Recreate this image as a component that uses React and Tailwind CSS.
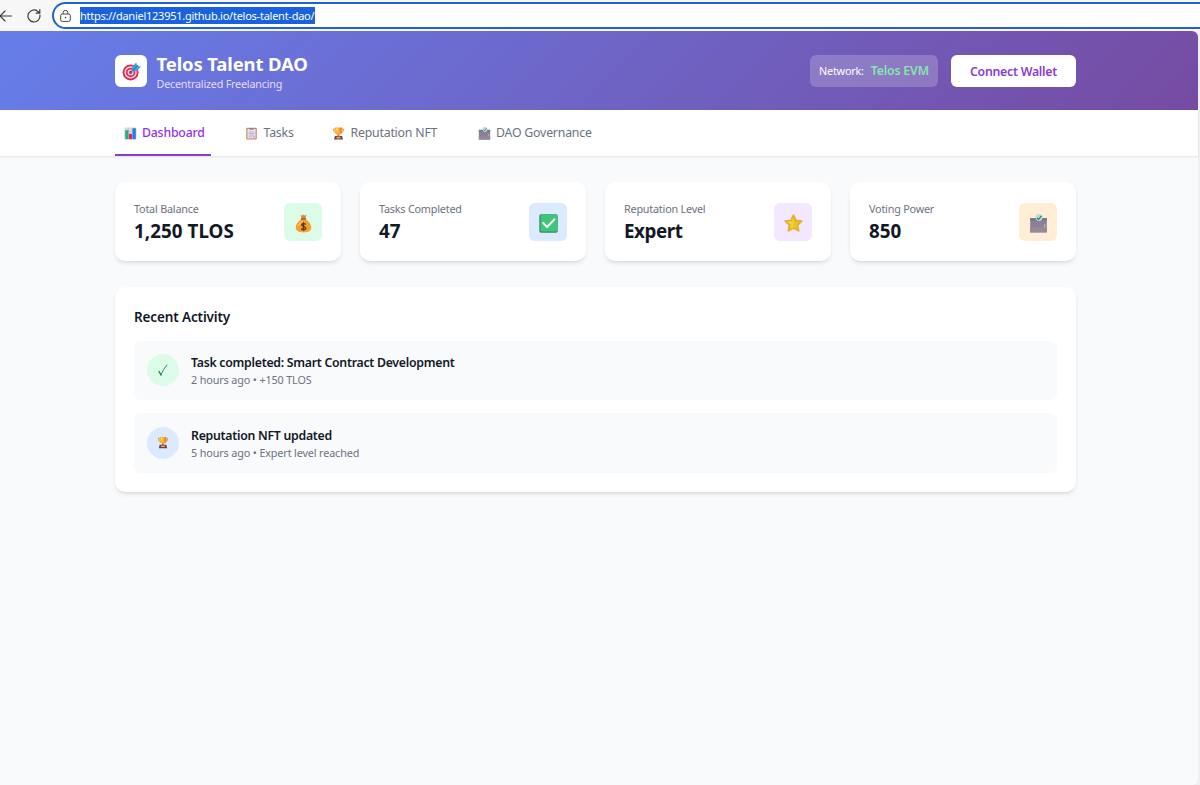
function Icon({ className, children }) {
  return (
    <svg viewBox="0 0 32 32" className={className} fill="none" aria-hidden="true">
      {children}
    </svg>
  );
}

function Target({ className }) {
  return (
    <Icon className={className}>
      <circle cx="14.5" cy="17.5" r="13.5" fill="#d92b54" />
      <circle cx="14.5" cy="17.5" r="10.4" fill="#f3d5e0" />
      <circle cx="14.5" cy="17.5" r="8" fill="#dc3159" />
      <circle cx="14.5" cy="17.5" r="5" fill="#f1d3de" />
      <circle cx="14.5" cy="17.5" r="2.6" fill="#d92b54" />
      <path d="M14.5 17.5 24 8" stroke="#30558a" strokeWidth="2" />
      <path d="M17 15V8l7-7 1.500 5.500L32 8l-7 7Z" fill="#3ba0df" />
      <path d="m18 14 9-9" stroke="#1e6bab" strokeWidth="1.500" />
    </Icon>
  );
}

function Chart({ className }) {
  return (
    <Icon className={className}>
      <rect x="1" y="1" width="30" height="30" rx="3" fill="#dcd6e2" />
      <path d="M1 11h30M1 21h30M11 1v30M21 1v30" stroke="#bdb3c8" />
      <rect x="3" y="8" width="8" height="22" fill="#22b07d" />
      <rect x="12" y="17" width="8" height="13" fill="#e0265f" />
      <rect x="21" y="3" width="8" height="27" fill="#1e82dc" />
    </Icon>
  );
}

function Clipboard({ className }) {
  return (
    <Icon className={className}>
      <rect x="3" y="2" width="26" height="29" rx="2.500" fill="#c98a6c" />
      <rect x="6" y="5" width="20" height="23" fill="#eee8f5" />
      <path d="M11 7V3h3a2.500 2.500 0 0 1 4 0h3v4Z" fill="#8d819c" />
      <path d="M9 12h14M9 16h14M9 20h14M9 24h9" stroke="#a394bd" strokeWidth="1.600" />
      <path d="M20 28v-5h6Z" fill="#b9a4cf" />
    </Icon>
  );
}

function Trophy({ className }) {
  return (
    <Icon className={className}>
      <path d="M9 5H4c0 7 2 9 7 10M23 5h5c0 7-2 9-7 10" stroke="#f08b2c" strokeWidth="2.400" />
      <path d="M7 1h18v8c0 6-3 10-9 10S7 15 7 9Z" fill="#fbb335" />
      <path d="M19 2h6v8c0 4-2 7-6 8Z" fill="#f28a2e" />
      <path d="M10 3h4v9c-3-2-4-5-4-9Z" fill="#ffdd73" />
      <path d="M14 18h4l1 5h-6Z" fill="#e8762d" />
      <path d="M7 22h18l2 9H5Z" fill="#74404f" />
      <rect x="11" y="24" width="10" height="4" rx="1" fill="#eba75b" />
    </Icon>
  );
}

function Ballot({ className }) {
  return (
    <Icon className={className}>
      <path d="M2 7h28v24H2Z" fill="#8b8095" />
      <path d="M2 7h28v4H2Z" fill="#797184" />
      <path d="M2 22h28v9H2Z" fill="#968799" />
      <path d="M11 6a6 6 0 1 1 12 0c0 4-3 6-6 6s-6-2-6-6Z" fill="#b6ded4" />
      <path d="m13.500 6.500 2.500 3L21 3" stroke="#337b70" strokeWidth="2" />
      <path d="M25 17h2.500v6H25Z" fill="#b4a8ba" />
    </Icon>
  );
}

function MoneyBag({ className }) {
  return (
    <Icon className={className}>
      <path d="m11 1 3 2 2-2 2 2 3-2-2 7h-6Z" fill="#d88b32" />
      <path d="M13 9h6c6 3 10 8 10 13.500 0 6-4 8.500-13 8.500S3 28.500 3 22.500C3 17 7 12 13 9Z" fill="#f4a229" />
      <path d="M12 12c-4 3-6 7-6 10 3-4 5-7 9-9Z" fill="#ffc552" />
      <path d="M11.500 8.500h9" stroke="#965229" strokeWidth="2.400" />
      <path d="M20 17.500c-2-2-7-2-7 1 0 3.500 7 2 7 5.500 0 3-5 3-8 1M16 14v14" stroke="#57352c" strokeWidth="2.200" />
    </Icon>
  );
}

function CheckBox({ className }) {
  return (
    <Icon className={className}>
      <rect x="0.500" y="0.500" width="31" height="31" rx="3" fill="#28935c" />
      <rect x="2.500" y="1" width="28.500" height="28.500" rx="2.500" fill="#41c57b" />
      <path d="m7 15 6.500 7L26 9" stroke="#fff" strokeWidth="3.400" strokeLinecap="round" strokeLinejoin="round" />
    </Icon>
  );
}

function Star({ className }) {
  return (
    <Icon className={className}>
      <path
        d="m16 2 4.200 8.700 9.600 1.300-7 6.700 1.800 9.600L16 23.700l-8.600 4.600 1.800-9.600-7-6.700 9.600-1.300Z"
        fill="#eec127"
        stroke="#e3b02a"
        strokeWidth="3"
        strokeLinejoin="round"
      />
      <path d="m16 4-3.500 8-8 1 7 5-1.500 8 6-4Z" fill="#f6d548" opacity=".6" />
    </Icon>
  );
}

function BrowserBar() {
  return (
    <div className="flex h-[31px] shrink-0 items-start bg-[#f7f7f7]">
      <div className="flex h-[31px] w-[52px] shrink-0 items-center">
        <svg viewBox="0 0 13 14" className="h-[14px] w-[13px]" fill="none" stroke="#3b3b3b" strokeWidth="1.100">
          <path d="M11.500 7H0M5 2 0 7l5 5" strokeLinecap="round" />
        </svg>
        <svg viewBox="0 0 14 14" className="ml-[14px] h-[14px] w-[14px]" fill="none" stroke="#3b3b3b" strokeWidth="1.200">
          <path d="M12.900 6A6 6 0 1 1 10.600 2.200L12.500 4M12.800.6V4.200H9.200" strokeLinecap="round" />
        </svg>
      </div>
      <div className="mt-[2px] flex h-[27px] flex-1 items-center overflow-hidden rounded-l-full border-y-2 border-l-2 border-[#2461d0] bg-white pl-[6px]">
        <svg viewBox="0 0 11 12" className="h-[12px] w-[11px]" fill="none" stroke="#444" strokeWidth="1">
          <rect x=".7" y="4" width="9.600" height="7.400" rx="1.600" />
          <path d="M3.200 4V2.600a2.300 2.300 0 0 1 4.600 0V4" />
          <circle cx="5.500" cy="7.600" r=".8" fill="#444" stroke="none" />
        </svg>
        <span className="ml-[9px] flex h-[17px] w-[235px] items-center pt-px text-[11px] tracking-[-0.25px] whitespace-nowrap bg-[#1a62dd] text-white">
          https://daniel123951.github.io/telos-talent-dao/
        </span>
      </div>
    </div>
  );
}

function Header() {
  return (
    <header className="flex h-[79px] shrink-0 items-center justify-between rounded-tr-[6px] bg-[linear-gradient(135deg,#667eea_0%,#764ba2_100%)] pr-[122px] pl-[115px]">
      <div className="flex items-center gap-[9.500px]">
        <div className="flex h-8 w-8 items-center justify-center rounded-[6px] bg-white">
          <Target className="mt-[2px] h-[19px] w-[19px]" />
        </div>
        <div className="pt-[3px] whitespace-nowrap">
          <h1 className="text-[18.500px] leading-[22px] font-bold tracking-[-0.14px] text-white">Telos Talent DAO</h1>
          <p className="text-[10.800px] leading-[17px] tracking-[-0.22px] text-[#e4dcfa]">Decentralized Freelancing</p>
        </div>
      </div>
      <div className="flex items-center gap-[13px]">
        <div className="flex h-8 w-[128px] items-center justify-center gap-[7px] rounded-[6px] bg-white/20 pt-[2px] whitespace-nowrap">
          <span className="text-[10.800px] tracking-[-0.22px] text-white">Network:</span>
          <span className="text-[12.300px] font-semibold tracking-[-0.16px] text-[#86e5b0]">Telos EVM</span>
        </div>
        <button className="h-8 w-[125px] rounded-[6px] bg-white pt-[3px] text-[12.300px] font-semibold tracking-[-0.25px] whitespace-nowrap text-[#8b3bd3]">
          Connect Wallet
        </button>
      </div>
    </header>
  );
}

const tabs = [
  { label: "Dashboard", icon: Chart, box: "w-[96px] mr-[25.500px] border-[#8b3bd3] font-medium text-[#9333ea]" },
  { label: "Tasks", icon: Clipboard, box: "w-[60px] mr-[27px] border-transparent text-[#6b7280]" },
  { label: "Reputation NFT", icon: Trophy, box: "w-[119px] mr-[26.500px] border-transparent text-[#6b7280]" },
  { label: "DAO Governance", icon: Ballot, box: "w-[130px] border-transparent text-[#6b7280]" },
];

function Nav() {
  return (
    <nav className="flex h-[46px] shrink-0 bg-white pl-[115px] shadow-[0_1px_2px_rgba(0,0,0,0.1)]">
      {tabs.map(({ label, icon: Glyph, box }) => (
        <div
          key={label}
          className={`flex h-[46px] shrink-0 items-center gap-[5.500px] border-b-2 pt-[3px] pl-[8.500px] text-[12.300px] tracking-[-0.2px] whitespace-nowrap ${box}`}
        >
          <Glyph className="h-[13px] w-[13px] shrink-0" />
          <span>{label}</span>
        </div>
      ))}
    </nav>
  );
}

const stats = [
  { label: "Total Balance", value: "1,250 TLOS", icon: MoneyBag, tint: "bg-[#dcfce7]", spacing: "tracking-[0.05px]" },
  { label: "Tasks Completed", value: "47", icon: CheckBox, tint: "bg-[#dbeafe]", spacing: "tracking-[0px]" },
  { label: "Reputation Level", value: "Expert", icon: Star, tint: "bg-[#f3e8ff]", spacing: "tracking-[-0.4px]" },
  { label: "Voting Power", value: "850", icon: Ballot, tint: "bg-[#ffedd5]", spacing: "tracking-[0px]" },
];

function StatCard({ label, value, icon: Glyph, tint, spacing }) {
  return (
    <div className="flex h-[79px] items-center justify-between rounded-[10px] bg-white px-[19px] shadow-[0_3px_5px_-1px_rgba(0,0,0,0.1),0_2px_3px_-2px_rgba(0,0,0,0.1)]">
      <div className="pt-[3px] whitespace-nowrap">
        <p className="text-[10.800px] leading-4 tracking-[-0.2px] text-[#6b7280]">{label}</p>
        <p className={`text-[18.800px] leading-[28px] font-bold text-[#111827] ${spacing}`}>{value}</p>
      </div>
      <div className={`flex h-[38px] w-[38px] items-center justify-center rounded-[6px] ${tint}`}>
        <Glyph className="mt-[3px] h-[19px] w-[19px]" />
      </div>
    </div>
  );
}

function Activity({ title, detail, tint, children }) {
  return (
    <div className="flex h-[59.500px] items-center gap-[12.500px] rounded-[6px] bg-[#f9fafb] pl-[12.500px]">
      <div className={`flex h-8 w-8 items-center justify-center rounded-full ${tint}`}>{children}</div>
      <div className="pt-[2px] whitespace-nowrap">
        <p className="text-[12.300px] leading-[18px] font-semibold tracking-[-0.27px] text-[#111827]">{title}</p>
        <p className="text-[10.800px] leading-4 tracking-[-0.13px] text-[#6b7280]">{detail}</p>
      </div>
    </div>
  );
}

export default function App() {
  return (
    <div className="flex h-[785px] w-[1200px] flex-col overflow-hidden bg-[#f0f0f1] font-['Noto_Sans','Open_Sans',sans-serif]">
      <BrowserBar />
      <div className="mr-[2px] flex flex-1 flex-col rounded-tr-[6px] rounded-br-[6px] bg-[#f9fafc]">
        <Header />
        <Nav />
        <main className="pt-[26px] pr-[122px] pl-[115px]">
          <section className="grid grid-cols-4 gap-[19px]">
            {stats.map((stat) => (
              <StatCard key={stat.label} {...stat} />
            ))}
          </section>
          <section className="mt-[26px] h-[204.500px] rounded-[10px] bg-white px-[19px] pt-[19px] shadow-[0_3px_5px_-1px_rgba(0,0,0,0.1),0_2px_3px_-2px_rgba(0,0,0,0.1)]">
            <h2 className="text-[13.500px] leading-[22px] font-semibold tracking-[-0.13px] text-[#111827]">Recent Activity</h2>
            <div className="mt-[12.500px] flex flex-col gap-[13px]">
              <Activity title="Task completed: Smart Contract Development" detail="2 hours ago • +150 TLOS" tint="bg-[#dcfce7]">
                <svg viewBox="0 0 10 12" className="h-[12px] w-[10px]" fill="none" stroke="#16854a" strokeLinecap="round">
                  <path d="M1 7.500 3 11" strokeWidth="1.400" />
                  <path d="M3 11C4.500 7 6.500 4 9 1" strokeWidth=".9" />
                </svg>
              </Activity>
              <Activity title="Reputation NFT updated" detail="5 hours ago • Expert level reached" tint="bg-[#dbeafe]">
                <Trophy className="h-[13px] w-[12px]" />
              </Activity>
            </div>
          </section>
        </main>
      </div>
    </div>
  );
}
